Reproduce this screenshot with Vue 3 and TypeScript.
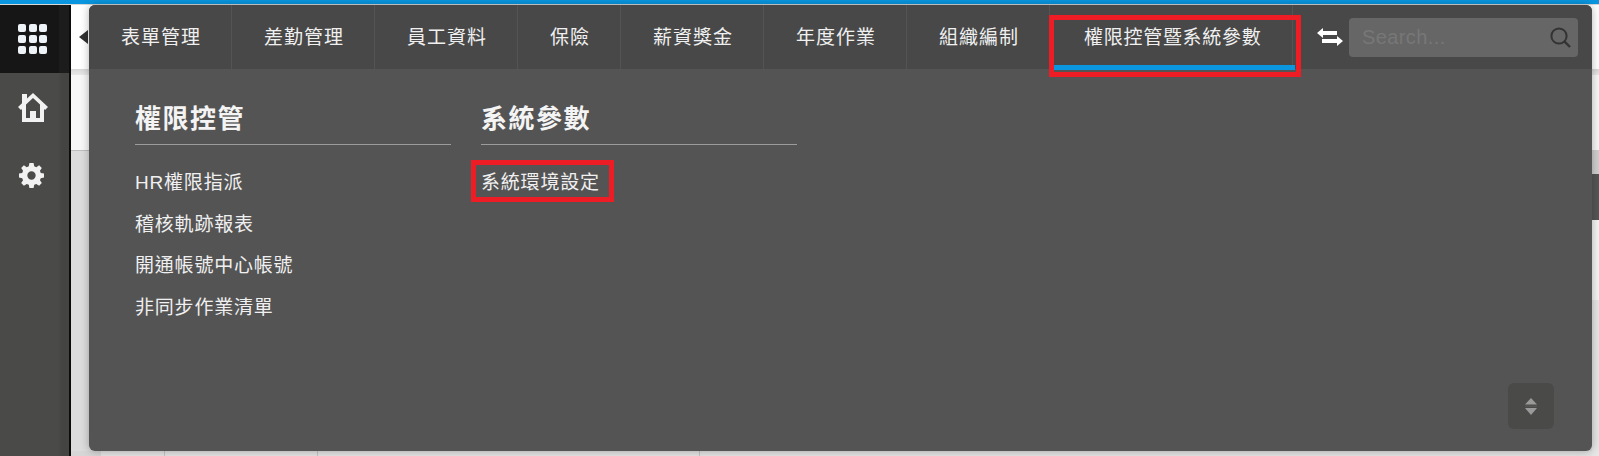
<script setup lang="ts">
const tabs = ['表單管理', '差勤管理', '員工資料', '保險', '薪資獎金', '年度作業', '組織編制', '權限控管暨系統參數']
const groups = [
  { title: '權限控管', items: ['HR權限指派', '稽核軌跡報表', '開通帳號中心帳號', '非同步作業清單'] },
  { title: '系統參數', items: ['系統環境設定'] },
]
const dots = Array.from({ length: 9 }, (_, i) => i)
</script>

<template>
  <div class="page">
    <div class="topline"></div>
    <div class="body">
      <aside class="side">
        <div class="apps">
          <span class="grid"><i v-for="d in dots" :key="d"></i></span>
        </div>
        <svg class="home" viewBox="0 0 30 30" width="30" height="30">
          <path fill="#f2f2f2" fill-rule="evenodd" d="M15 0 L30 14 L27 17 L26 16 L26 29 L4 29 L4 16 L3 17 L0 14 L4 10.3 L4 1 L9 1 L9 5.6 Z M15 5 L8 11.5 L8 25 L12 25 L12 18 L18 18 L18 25 L22 25 L22 11.5 Z"/>
        </svg>
        <svg class="gear" viewBox="0 0 24 24" width="25" height="25">
          <path fill="#f2f2f2" fill-rule="evenodd" d="M10 0h4l.6 3.2 2 .8L19.3 2.2l2.6 2.6-1.8 2.7.8 2L24 10v4l-3.1.6-.8 2 1.8 2.7-2.6 2.6-2.7-1.8-2 .8L14 24h-4l-.6-3.1-2-.8-2.7 1.8-2.6-2.6 1.8-2.7-.8-2L0 14v-4l3.1-.5.8-2-1.8-2.7 2.6-2.6 2.7 1.8 2-.8zM12 8a4 4 0 1 0 0 8 4 4 0 0 0 0-8z"/>
        </svg>
      </aside>
      <main class="back">
        <div class="band white"></div>
        <div class="band shade"></div>
        <div class="band pale"></div>
        <div class="band grey"></div>
        <div class="foot">
          <span class="cell c1"></span><span class="cell c2"></span><span class="cell c3"></span><span class="cell c4"></span>
        </div>
      </main>
    </div>

    <span class="caret"></span>

    <div class="edge">
      <span class="edge-a"></span>
      <span class="edge-b"></span>
      <span class="edge-c"></span>
      <span class="edge-d"></span>
    </div>

    <section class="panel">
      <header class="bar">
        <nav class="tabs">
          <a v-for="(t, i) in tabs" :key="t" class="tab" :class="{ active: i === tabs.length - 1 }">{{ t }}</a>
        </nav>
        <svg class="swap" viewBox="0 0 26 18" width="26" height="18">
          <path fill="#fff" d="M0 5 L6 0 L6 3 L20 3 L20 7 L6 7 L6 10 Z M26 13 L20 8 L20 11 L5 11 L5 15 L20 15 L20 18 Z"/>
        </svg>
        <div class="search">
          <span class="ph">Search...</span>
          <svg viewBox="0 0 21 21" width="21" height="21">
            <circle cx="9" cy="9" r="7.6" fill="none" stroke="#333" stroke-width="2"/>
            <path d="M14.4 14.4 L20 20" stroke="#333" stroke-width="2.4"/>
          </svg>
        </div>
      </header>
      <div class="content">
        <div v-for="g in groups" :key="g.title" class="group">
          <h3>{{ g.title }}</h3>
          <a v-for="it in g.items" :key="it" class="item">{{ it }}</a>
        </div>
      </div>
      <button class="sort" type="button" aria-label="sort">
        <svg viewBox="0 0 14 17" width="14" height="17">
          <path fill="#9a9a9a" d="M7 0 L13 6.5 L1 6.5 Z M1 10 L13 10 L7 17 Z"/>
          <rect x="1" y="7.6" width="12" height="1.2" fill="#5a5a5a"/>
        </svg>
      </button>
    </section>

    <div class="mark mark-tab"></div>
    <div class="mark mark-item"></div>
  </div>
</template>

<style>
html, body { margin: 0; background: #e4e4e4; overflow: hidden; }
</style>

<style scoped>
.page {
  position: relative;
  width: 1599px;
  height: 456px;
  overflow: hidden;
  display: flex;
  flex-direction: column;
  font-family: "Liberation Sans", "Noto Sans CJK TC", sans-serif;
}
.topline { height: 4px; background: #0a97e0; border-bottom: 1px solid #d8d8d8; flex: none; }
.body { flex: 1; display: flex; min-height: 0; }
.side {
  width: 69px;
  flex: none;
  background: linear-gradient(90deg, #4a4a48 58px, #444442 62px);
  border-right: 2px solid #0c0c0c;
  display: flex;
  flex-direction: column;
  align-items: center;
}
.apps {
  width: 100%;
  height: 68px;
  box-sizing: border-box;
  padding-right: 4px;
  background: linear-gradient(90deg, #161616 59px, #1c1c1c 59px);
  display: flex;
  align-items: center;
  justify-content: center;
  flex: none;
}
.grid { display: grid; grid-template-columns: repeat(3, 8px); gap: 2.6px; }
.grid i { width: 8px; height: 8px; border-radius: 2px; background: #eef3f8; }
.home { margin: 20px 4px 0 0; flex: none; }
.gear { margin: 40px 6px 0 0; flex: none; }
.back { flex: 1; min-width: 0; display: flex; flex-direction: column; }
.band { flex: none; }
.white { height: 64px; background: #fff; }
.shade { height: 6px; background: linear-gradient(#d8d8d8, #e8e8e8); }
.pale { height: 75px; background: #f7f7f7; border-bottom: 1px solid #bdbdbd; }
.grey { flex: 1; background: #dcdcdc; }
.foot { height: 5px; flex: none; display: flex; background: #e4e4e4; }
.cell { display: block; flex: none; height: 100%; box-sizing: border-box; border-right: 1px solid #c4c4c4; }
.c1 { width: 30px; background: #d6d6d6; border-right: 0; }
.c2 { width: 64px; }
.c3 { width: 153px; }
.c4 { width: 382px; }
.caret {
  position: absolute;
  left: 79px;
  top: 30px;
  width: 0;
  height: 0;
  border-style: solid;
  border-width: 7px 9px 7px 0;
  border-color: transparent #333 transparent transparent;
}
.edge {
  position: absolute;
  right: 0;
  top: 150px;
  width: 7px;
  height: 306px;
  display: flex;
  flex-direction: column;
}
.edge span { display: block; flex: none; }
.edge-a { height: 24px; background: #cfcfcf; }
.edge-b { height: 46px; background: #565656; }
.edge-c { height: 80px; background: #f4f4f4; }
.edge-d { height: 156px; background: #e6e6e6; }
.panel {
  position: absolute;
  left: 89px;
  top: 5px;
  width: 1503px;
  height: 446px;
  background: #545454;
  border-radius: 6px;
  box-shadow: 0 0 8px rgba(0, 0, 0, .3);
  display: flex;
  flex-direction: column;
}
.bar {
  height: 64px;
  flex: none;
  background: #484848;
  border-radius: 6px 6px 0 0;
  display: flex;
  align-items: center;
}
.tabs { display: flex; height: 100%; width: 1204px; flex: none; }
.tab {
  position: relative;
  flex: none;
  box-sizing: border-box;
  height: 64px;
  padding: 0 30px 0 32px;
  border-right: 1px solid #545454;
  color: #f0f0f0;
  font-size: 19px;
  letter-spacing: 1px;
  line-height: 65px;
  white-space: nowrap;
}
.tab.active { width: 243px; padding: 0 0 0 34px; letter-spacing: .7px; }
.tab.active::after {
  content: "";
  position: absolute;
  left: 2px;
  right: -3px;
  top: 60px;
  height: 5px;
  background: #0a97e0;
}
.swap { margin-left: 24px; flex: none; }
.search {
  margin-left: 6px;
  width: 229px;
  height: 39px;
  box-sizing: border-box;
  padding: 0 7px 0 13px;
  background: #666;
  border-radius: 4px;
  display: flex;
  align-items: center;
  justify-content: space-between;
}
.ph { color: #777; font-size: 20px; letter-spacing: .4px; }
.content { display: flex; gap: 30.5px; padding: 0 46px; }
.group { width: 315.5px; display: flex; flex-direction: column; }
h3 {
  margin: 0 0 17px;
  height: 76px;
  box-sizing: border-box;
  padding-top: 32px;
  border-bottom: 1px solid #9c9c9c;
  color: #f4f4f4;
  font-size: 26px;
  font-weight: 700;
  letter-spacing: 1.5px;
  line-height: 36px;
}
.item {
  height: 41.7px;
  line-height: 41.7px;
  color: #f0f0f0;
  font-size: 19px;
  letter-spacing: .8px;
  white-space: nowrap;
}
.sort {
  position: absolute;
  right: 38px;
  bottom: 22px;
  width: 46px;
  height: 46px;
  padding: 0;
  border: 0;
  border-radius: 6px;
  background: #4a4a48;
  display: flex;
  align-items: center;
  justify-content: center;
}
.mark { position: absolute; box-sizing: border-box; border: 5px solid #ee1c25; }
.mark-tab { left: 1049px; top: 15px; width: 252px; height: 62px; }
.mark-item { left: 471px; top: 160px; width: 143px; height: 42px; }
</style>
